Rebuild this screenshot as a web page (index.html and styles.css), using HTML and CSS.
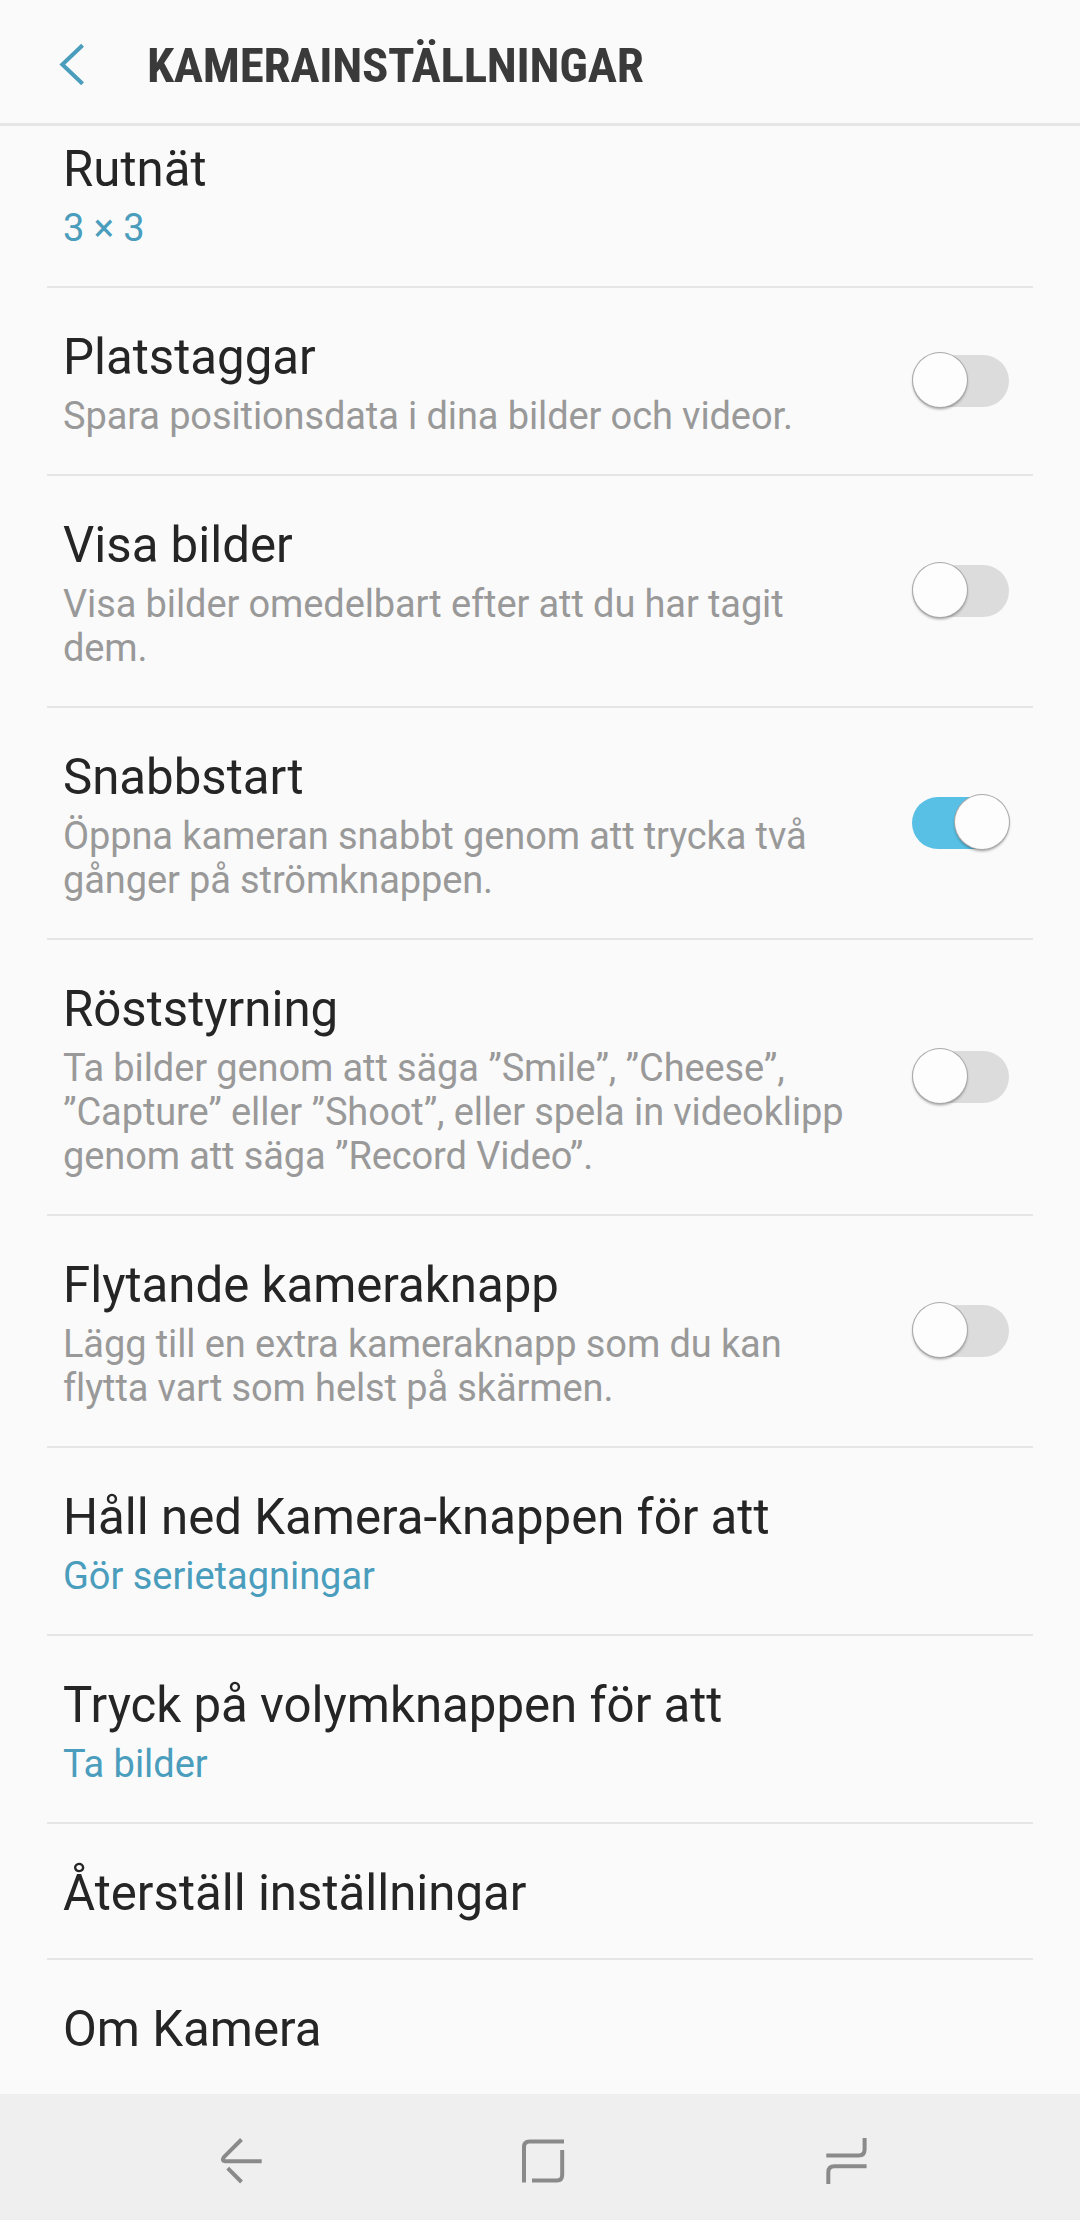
FILE: index.html
```html
<!DOCTYPE html>
<html lang="sv">
<head>
<meta charset="utf-8">
<title>Kamerainställningar</title>
<link rel="stylesheet" href="styles.css">
</head>
<body>
<div class="screen">
  <header class="header">
    <svg class="back" width="32" height="48" viewBox="0 0 32 48" aria-hidden="true"><path d="M28.6 4.2 8.3 23.5 28.6 42.8"/></svg>
    <h1 class="header-title">KAMERAINSTÄLLNINGAR</h1>
  </header>
  <main class="list">
    <section class="item item-first">
      <div class="text"><h2 class="title">Rutnät</h2><p class="desc value">3 × 3</p></div>
    </section>
    <section class="item">
      <div class="text"><h2 class="title">Platstaggar</h2><p class="desc">Spara positionsdata i dina bilder och videor.</p></div>
      <div class="switch"><span class="thumb"></span></div>
    </section>
    <section class="item">
      <div class="text"><h2 class="title">Visa bilder</h2><p class="desc">Visa bilder omedelbart efter att du har tagit<br>dem.</p></div>
      <div class="switch"><span class="thumb"></span></div>
    </section>
    <section class="item">
      <div class="text"><h2 class="title">Snabbstart</h2><p class="desc">Öppna kameran snabbt genom att trycka två<br>gånger på strömknappen.</p></div>
      <div class="switch switch-on"><span class="thumb"></span></div>
    </section>
    <section class="item">
      <div class="text"><h2 class="title">Röststyrning</h2><p class="desc">Ta bilder genom att säga ”Smile”, ”Cheese”,<br>”Capture” eller ”Shoot”, eller spela in videoklipp<br>genom att säga ”Record Video”.</p></div>
      <div class="switch"><span class="thumb"></span></div>
    </section>
    <section class="item">
      <div class="text"><h2 class="title">Flytande kameraknapp</h2><p class="desc">Lägg till en extra kameraknapp som du kan<br>flytta vart som helst på skärmen.</p></div>
      <div class="switch"><span class="thumb"></span></div>
    </section>
    <section class="item">
      <div class="text"><h2 class="title">Håll ned Kamera-knappen för att</h2><p class="desc value">Gör serietagningar</p></div>
    </section>
    <section class="item">
      <div class="text"><h2 class="title">Tryck på volymknappen för att</h2><p class="desc value">Ta bilder</p></div>
    </section>
    <section class="item">
      <div class="text"><h2 class="title">Återställ inställningar</h2></div>
    </section>
    <section class="item item-last">
      <div class="text"><h2 class="title">Om Kamera</h2></div>
    </section>
  </main>
  <nav class="navbar">
    <svg class="nav-icon" width="60" height="60" viewBox="0 0 60 60" aria-hidden="true"><path d="M31.5 9.5 13.8 27.2Q11.5 31.2 15 31.2H51.7M17.7 38.2 31.5 52"/></svg>
    <svg class="nav-icon nav-home" width="60" height="60" viewBox="0 0 60 60" aria-hidden="true"><path d="M10 52.5V17Q10 11.5 15.5 11.5H50M48.2 20V45Q48.2 50.5 42.7 50.5H18"/></svg>
    <svg class="nav-icon" width="60" height="60" viewBox="0 0 60 60" aria-hidden="true"><path d="M48.6 8V19.5Q48.6 25.6 42.5 25.6H10.3M50.6 36.3H18.4Q12.3 36.3 12.3 42.4V54"/></svg>
  </nav>
</div>
</body>
</html>
```
FILE: styles.css
```css
* { box-sizing: border-box; margin: 0; padding: 0; }

body {
  background: #fafafa;
  font-family: Roboto, "Liberation Sans", sans-serif;
}

.screen {
  display: flex;
  flex-direction: column;
  width: 1080px;
  height: 2220px;
  overflow: hidden;
  background: #fafafa;
}

.header {
  display: flex;
  align-items: center;
  flex: none;
  height: 126px;
  padding: 2px 0 0 54px;
  border-bottom: 3px solid #e6e6e6;
}

.back {
  margin-top: 4px;
  fill: none;
  stroke: #4a9dbc;
  stroke-width: 4;
}

.header-title {
  margin: 6px 0 0 61px;
  font-family: "Roboto Condensed", Roboto, sans-serif;
  font-size: 49px;
  font-stretch: 75%;
  font-weight: 700;
  line-height: 58px;
  letter-spacing: -.28px;
  white-space: nowrap;
  color: #3a3a3a;
}

.list { flex: 1; padding: 0 47px; }

.item {
  display: flex;
  align-items: center;
  justify-content: space-between;
  padding: 40px 24px 36px 16px;
  border-bottom: 2px solid #e5e5e5;
}

.item-first { padding-top: 14px; }
.item-last { border-bottom: 0; }

.text { white-space: nowrap; }

.title {
  font-size: 49.2px;
  font-weight: 400;
  line-height: 58px;
  color: #252525;
}

.desc {
  margin-top: 8px;
  font-size: 38px;
  line-height: 44px;
  letter-spacing: -.11px;
  color: #999;
}

.value {
  letter-spacing: -.03px;
  color: #4a9dbc;
}

.switch {
  display: flex;
  align-items: center;
  flex: none;
  width: 97px;
  height: 52px;
  margin-top: -4px;
  border-radius: 26px;
  background: #dcdcdc;
}

.switch-on { justify-content: flex-end; background: #57c0e4; }

.thumb {
  flex: none;
  width: 54px;
  height: 54px;
  margin: -3px 1px 0;
  border-radius: 50%;
  background: #fdfdfd;
  box-shadow: 0 0 0 1px #aaa, 0 2px 3px rgba(0, 0, 0, .4);
}

.switch-on .thumb { margin-right: 0; }

.navbar {
  display: flex;
  justify-content: space-between;
  flex: none;
  height: 126px;
  padding: 36px 204px 0 210px;
  background: #efefef;
}

.nav-icon {
  fill: none;
  stroke: #8a8a8a;
  stroke-width: 4;
}

.nav-home { margin-left: 2px; }
```
